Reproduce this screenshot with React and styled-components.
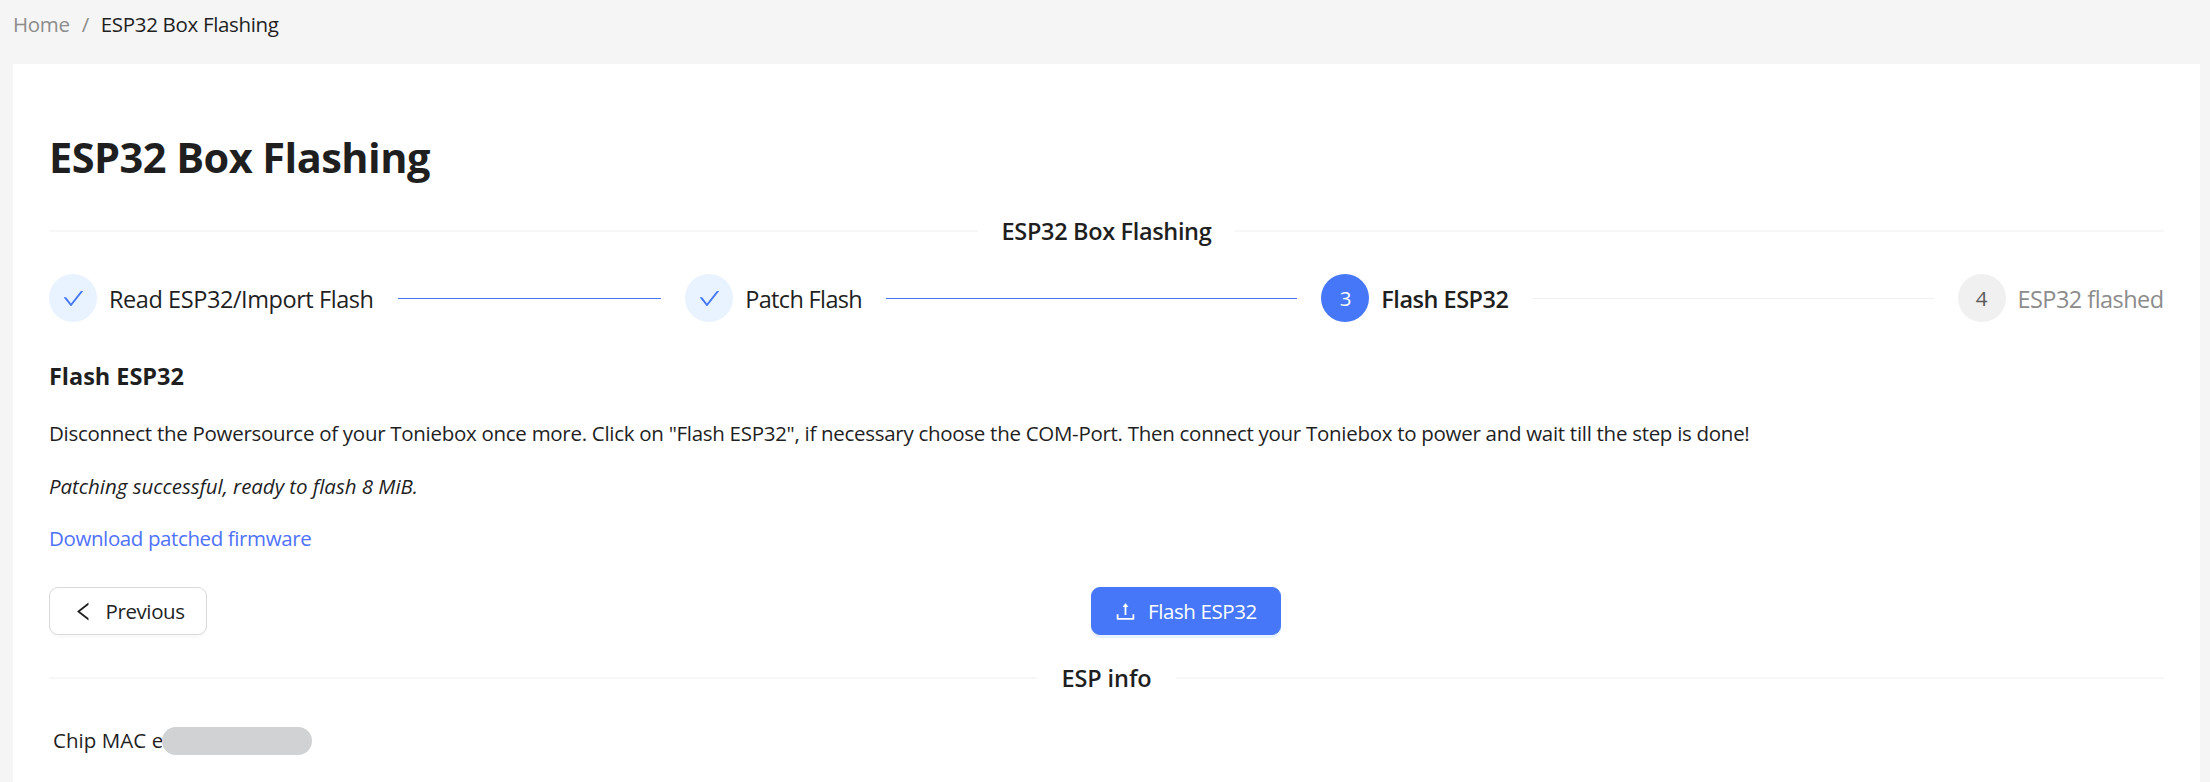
import React from "react";
import styled, { createGlobalStyle } from "styled-components";

const GlobalStyle = createGlobalStyle`
  *, *::before, *::after { box-sizing: border-box; }
  body {
    margin: 0;
    background: #f5f5f5;
    color: #1f1f1f;
    font-family: "Open Sans", "Noto Sans", sans-serif;
    font-size: 20.5px;
    line-height: 33px;
    letter-spacing: -0.33px;
    overflow: hidden;
  }
`;

const Page = styled.div`
  display: flex;
  flex-direction: column;
  height: 782px;
  padding: 0 10px 0 13px;
`;

const Breadcrumb = styled.nav`
  display: flex;
  height: 64px;
  padding-top: 8px;
  white-space: pre;
`;

const Crumb = styled.span`
  color: ${(p) => (p.$current ? "#1f1f1f" : "#8c8c8c")};
`;

const Separator = styled.span`
  margin: 0 12px;
  color: #8c8c8c;
`;

const Card = styled.main`
  flex: 1;
  padding: 68px 36px 0;
  background: #fff;
`;

const Title = styled.h1`
  margin: 0 0 30px;
  font-size: 41.5px;
  font-weight: 700;
  line-height: 51px;
  letter-spacing: -0.54px;
`;

const DividerRow = styled.div`
  display: flex;
  align-items: center;
  gap: 24px;
  height: 36px;
  font-size: 23.5px;
  font-weight: 600;
  letter-spacing: ${(p) => p.$track};
  white-space: nowrap;

  &::before,
  &::after {
    content: "";
    flex: 1;
    height: 2px;
    background: #f7f7f7;
  }
`;

const StepList = styled.ol`
  display: flex;
  margin: 25px 0 36px;
  padding: 0;
  list-style: none;
`;

const StepItem = styled.li`
  display: flex;
  align-items: center;
  flex: ${(p) => (p.$last ? "0 0 206.5px" : "1 1 0")};
  min-width: 0;
  height: 48px;
`;

const StepBadge = styled.span`
  display: flex;
  align-items: center;
  justify-content: center;
  flex: none;
  width: 48px;
  height: 48px;
  margin-right: 12px;
  border-radius: 50%;
  background: ${(p) => ({ done: "#e8f3ff", active: "#4577f8", waiting: "#f0f0f0" })[p.$state]};
  color: ${(p) => (p.$state === "active" ? "#fff" : "#595959")};
`;

const StepLabel = styled.span`
  padding-top: 2px;
  color: ${(p) => (p.$state === "waiting" ? "#8c8c8c" : "#1f1f1f")};
  font-size: 23.5px;
  font-weight: ${(p) => (p.$state === "active" ? 600 : 400)};
  letter-spacing: ${(p) => p.$track};
  white-space: nowrap;
`;

const StepRail = styled.span`
  flex: 1;
  height: 1px;
  margin: 0 24px;
  background: ${(p) => (p.$done ? "#4577f8" : "#f0f0f0")};
`;

const Heading = styled.h2`
  margin: 0 0 23px;
  font-size: 23.5px;
  font-weight: 700;
  line-height: 36px;
  letter-spacing: -0.03px;
`;

const Paragraph = styled.p`
  margin: 0 0 19.5px;
  font-style: ${(p) => (p.$italic ? "italic" : "normal")};
  letter-spacing: ${(p) => p.$track};
  white-space: nowrap;
`;

const DownloadLink = styled.a`
  color: #4f72fa;
  text-decoration: none;
`;

const Actions = styled.div`
  display: flex;
  justify-content: space-between;
  margin: 32px 0 25px;
`;

const Button = styled.button`
  display: flex;
  align-items: center;
  gap: ${(p) => (p.$primary ? "12.5px" : "11.5px")};
  width: ${(p) => (p.$primary ? "190px" : "158px")};
  height: 48px;
  padding: 0 0 0 23px;
  border: 1px solid ${(p) => (p.$primary ? "#4577f8" : "#d9d9d9")};
  border-radius: 9px;
  background: ${(p) => (p.$primary ? "#4577f8" : "#fff")};
  box-shadow: 0 3px 0 ${(p) => (p.$primary ? "#e9f2ff" : "rgba(0, 0, 0, 0.02)")};
  color: ${(p) => (p.$primary ? "#fff" : "#1f1f1f")};
  font: inherit;
  letter-spacing: -0.4px;
  white-space: nowrap;
`;

const InfoRow = styled.div`
  display: flex;
  align-items: center;
  height: 33px;
  margin-top: 28px;
  padding-left: 4px;
  letter-spacing: 0.06px;
`;

const Redaction = styled.span`
  width: 150px;
  height: 28px;
  margin-left: -1.5px;
  border-radius: 14px;
  background: #d1d2d4;
`;

const CheckIcon = () => (
  <svg width="21" height="21" viewBox="64 64 896 896" fill="#4577f8">
    <path d="M912 190h-69.900c-9.800 0-19.100 4.500-25.100 12.200L404.700 724.500 207 474a32 32 0 0 0-25.100-12.200H112c-6.700 0-10.400 7.700-6.300 12.900l273.900 347c12.800 16.200 37.400 16.200 50.300 0l488.400-618.900c4.100-5.100.4-12.800-6.300-12.800z" />
  </svg>
);

const LeftIcon = () => (
  <svg width="21" height="21" viewBox="64 64 896 896" fill="currentColor">
    <path d="M724 218.300V141c0-6.700-7.700-10.400-12.900-6.300L260.300 486.800a31.860 31.860 0 0 0 0 50.300l450.800 352.100c5.300 4.100 12.900.4 12.900-6.300v-77.300c0-4.900-2.300-9.600-6.100-12.600l-360-281 360-281.100c3.800-3 6.100-7.700 6.100-12.600z" />
  </svg>
);

const UploadIcon = () => (
  <svg width="21" height="21" viewBox="64 64 896 896" fill="currentColor">
    <path d="M400 317.700h73.900V656c0 4.400 3.600 8 8 8h60c4.400 0 8-3.600 8-8V317.700H624c6.700 0 10.400-7.700 6.300-12.900L518.300 163a8 8 0 0 0-12.600 0l-112 141.700c-4.100 5.300-.4 13 6.300 13zM878 626h-60c-4.400 0-8 3.600-8 8v154H214V634c0-4.400-3.600-8-8-8h-60c-4.400 0-8 3.600-8 8v198c0 17.700 14.300 32 32 32h684c17.700 0 32-14.300 32-32V634c0-4.400-3.600-8-8-8z" />
  </svg>
);

const steps = [
  { label: "Read ESP32/Import Flash", state: "done", track: "-0.43px" },
  { label: "Patch Flash", state: "done", track: "-0.65px" },
  { label: "Flash ESP32", state: "active", track: "-0.5px" },
  { label: "ESP32 flashed", state: "waiting", track: "-0.55px" },
];

export default function App() {
  return (
    <>
      <GlobalStyle />
      <Page>
        <Breadcrumb>
          <Crumb>Home</Crumb>
          <Separator>/</Separator>
          <Crumb $current>ESP32 Box Flashing</Crumb>
        </Breadcrumb>
        <Card>
          <Title>ESP32 Box Flashing</Title>
          <DividerRow $track="-0.34px">ESP32 Box Flashing</DividerRow>
          <StepList>
            {steps.map((step, i) => {
              const last = i === steps.length - 1;
              return (
                <StepItem key={step.label} $last={last}>
                  <StepBadge $state={step.state}>
                    {step.state === "done" ? <CheckIcon /> : i + 1}
                  </StepBadge>
                  <StepLabel $state={step.state} $track={step.track}>{step.label}</StepLabel>
                  {!last && <StepRail $done={step.state === "done"} />}
                </StepItem>
              );
            })}
          </StepList>
          <Heading>Flash ESP32</Heading>
          <Paragraph $track="-0.288px">
            Disconnect the Powersource of your Toniebox once more. Click on "Flash ESP32", if necessary choose the
            COM-Port. Then connect your Toniebox to power and wait till the step is done!
          </Paragraph>
          <Paragraph $italic $track="-0.04px">Patching successful, ready to flash 8 MiB.</Paragraph>
          <Paragraph $track="-0.39px">
            <DownloadLink>Download patched firmware</DownloadLink>
          </Paragraph>
          <Actions>
            <Button>
              <LeftIcon />
              Previous
            </Button>
            <Button $primary>
              <UploadIcon />
              Flash ESP32
            </Button>
            <span />
          </Actions>
          <DividerRow $track="-0.1px">ESP info</DividerRow>
          <InfoRow>
            Chip MAC e
            <Redaction />
          </InfoRow>
        </Card>
      </Page>
    </>
  );
}
